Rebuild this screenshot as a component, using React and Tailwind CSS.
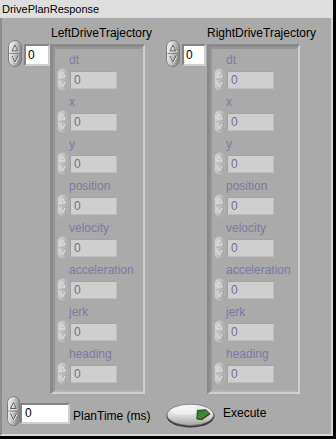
import React from "react";

function Spinner({ w, h, disabled, className = "" }) {
  const gid = disabled ? "spinGradD" : "spinGradE";
  const mid = h / 2;
  const cx = w / 2;
  const aw = disabled ? 2.5 : 3;
  const ah = disabled ? 6 : 7;
  const arrow = disabled ? "#e6e6e6" : "#5e5e5e";
  const arrowHi = disabled ? "#b9b9b9" : "#ffffff";
  return (
    <svg width={w} height={h} viewBox={`0 0 ${w} ${h}`} className={"shrink-0 " + className}>
      <defs>
        <linearGradient id={gid} x1="0" y1="0" x2="1" y2="0.3">
          <stop offset="0" stopColor={disabled ? "#d9d9d9" : "#f6f6f6"} />
          <stop offset="0.45" stopColor={disabled ? "#c8c8c8" : "#d6d6d6"} />
          <stop offset="1" stopColor={disabled ? "#a9a9a9" : "#8a8a8a"} />
        </linearGradient>
      </defs>
      <rect
        x="0.5"
        y="0.5"
        width={w - 1}
        height={h - 1}
        rx={(w - 1) / 2}
        fill={`url(#${gid})`}
        stroke={disabled ? "#b3b3b3" : "#7c7c7c"}
      />
      <line x1="1.5" x2={w - 1.5} y1={mid} y2={mid} stroke={disabled ? "#b8b8b8" : "#8a8a8a"} />
      <polygon
        points={`${cx - aw},${mid - 2.5} ${cx},${mid - 2.5 - ah + 1} ${cx + aw},${mid - 2.5}`}
        fill="none"
        stroke={arrowHi}
        strokeWidth="1"
        transform="translate(0.6,0.6)"
      />
      <polygon
        points={`${cx - aw},${mid - 2.5} ${cx},${mid - 2.5 - ah + 1} ${cx + aw},${mid - 2.5}`}
        fill="none"
        stroke={arrow}
        strokeWidth="1"
      />
      <polyline
        points={`${cx - aw},${mid + 2.5} ${cx},${mid + 2.5 + ah - 1} ${cx + aw},${mid + 2.5}`}
        fill="none"
        stroke={arrowHi}
        strokeWidth="1"
        transform="translate(0.6,0.6)"
      />
      <polyline
        points={`${cx - aw},${mid + 2.5} ${cx},${mid + 2.5 + ah - 1} ${cx + aw},${mid + 2.5}`}
        fill="none"
        stroke={arrow}
        strokeWidth="1"
      />
    </svg>
  );
}

const ITEMS = ["dt", "x", "y", "position", "velocity", "acceleration", "jerk", "heading"];

function Item({ label }) {
  return (
    <div className="flex flex-col">
      <div className="h-[15px] leading-[15px] pl-[12px] text-[#7b7ba3] whitespace-nowrap">{label}</div>
      <div className="flex h-[22px] items-start">
        <Spinner w={11} h={23} disabled />
        <div className="ml-[2px] mt-[3px] h-[18px] w-[47px] bg-[#cfcfcf] border border-t-[#a3a3a3] border-l-[#a3a3a3] border-r-[#bdbdbd] border-b-[#bdbdbd] pl-[3px] leading-[16px] text-[#7070a2]">
          0
        </div>
      </div>
    </div>
  );
}

function ArrayFrame({ className }) {
  return (
    <div
      className={
        "shrink-0 border-t-[3px] border-l-[3px] border-r-2 border-b-2 border-t-[#8a8a8a] border-l-[#8a8a8a] border-r-[#cecece] border-b-[#cecece] " +
        className
      }
    >
      <div className="border-2 border-t-[#969696] border-l-[#969696] border-r-[#a9a9a9] border-b-[#b3b3b3] pl-[2px] pt-[4px] pb-[6px] flex flex-col gap-[5px]">
        {ITEMS.map((it) => (
          <Item key={it} label={it} />
        ))}
      </div>
    </div>
  );
}

function IndexBox({ className }) {
  return (
    <div
      className={
        "shrink-0 h-[22px] bg-white border-2 border-t-[#838383] border-l-[#838383] border-r-[#cfcfcf] border-b-[#cfcfcf] pl-[2px] leading-[18px] text-black " +
        className
      }
    >
      0
    </div>
  );
}

function Group({ label, labelMl, boxW, frameMl, frameW, groupW }) {
  return (
    <div className={"flex flex-col shrink-0 " + groupW}>
      <div className={"h-[13px] leading-[13px] whitespace-nowrap text-black " + labelMl}>{label}</div>
      <div className="flex items-start">
        <Spinner w={14} h={27} />
        <IndexBox className={"ml-[2px] mt-[4px] " + boxW} />
        <ArrayFrame className={"mt-[4px] " + frameMl + " " + frameW} />
      </div>
    </div>
  );
}

function ExecuteButton() {
  return (
    <svg width="49" height="25" viewBox="0 0 49 25" className="shrink-0">
      <defs>
        <linearGradient id="btnGrad" x1="0" y1="0" x2="0" y2="1">
          <stop offset="0" stopColor="#f7f7f7" />
          <stop offset="0.55" stopColor="#d9d9d9" />
          <stop offset="1" stopColor="#a4a4a4" />
        </linearGradient>
        <linearGradient id="ledGrad" x1="0" y1="0" x2="1" y2="1">
          <stop offset="0" stopColor="#2a6a2a" />
          <stop offset="0.5" stopColor="#3c8f3c" />
          <stop offset="1" stopColor="#245824" />
        </linearGradient>
      </defs>
      <ellipse cx="24.5" cy="13" rx="24" ry="11.5" fill="#3c3c3c" />
      <ellipse cx="24.3" cy="11.8" rx="23.3" ry="10.6" fill="url(#btnGrad)" stroke="#7a7a7a" strokeWidth="0.8" />
      <ellipse cx="18" cy="8" rx="13" ry="4" fill="#ffffff" opacity="0.45" />
      <polygon points="31.3,7.3 40,6.7 44,10.7 35.7,16.5 30.8,15.7" fill="url(#ledGrad)" stroke="#1f3d14" strokeWidth="0.8" />
      <polyline points="44,10.7 35.7,16.5 30.8,15.7" fill="none" stroke="#4a4414" strokeWidth="1.2" />
    </svg>
  );
}

export default function App() {
  return (
    <div className="w-[336px] h-[439px] flex flex-col border-r-[3px] border-b-[3px] border-black font-['Liberation_Sans',Arial,sans-serif] text-[12px] select-none overflow-hidden">
      <div className="h-[18px] shrink-0 bg-[#dedede] pl-[2px] leading-[18px] text-[11px] text-black whitespace-nowrap">
        DrivePlanResponse
      </div>
      <div className="flex-1 flex flex-col bg-[#aaaaaa] border-l-2 border-l-[#8c8c8c] border-r-2 border-r-[#d6d6d6] border-b-2 border-b-[#d6d6d6] pt-[9px]">
        <div className="flex items-start pl-[6px] gap-[21px]">
          <Group label="LeftDriveTrajectory" labelMl="ml-[43px]" boxW="w-[26px]" frameMl="ml-0" frameW="w-[95px]" groupW="w-[137px]" />
          <Group label="RightDriveTrajectory" labelMl="ml-[41px]" boxW="w-[24px]" frameMl="ml-[1px]" frameW="w-[93px]" groupW="w-[134px]" />
        </div>
        <div className="flex items-start pl-[5px]">
          <Spinner w={13} h={30} className="mt-[2px]" />
          <div className="mt-[9px] h-[21px] w-[50px] bg-white border-2 border-t-[#838383] border-l-[#838383] border-r-[#cfcfcf] border-b-[#cfcfcf] pl-[3px] leading-[17px] text-black">
            0
          </div>
          <div className="ml-[3px] mt-[15px] w-[93px] leading-[14px] whitespace-nowrap text-black">PlanTime (ms)</div>
          <div className="mt-[9px]">
            <ExecuteButton />
          </div>
          <div className="ml-[8px] mt-[12px] leading-[14px] text-black">Execute</div>
        </div>
      </div>
    </div>
  );
}
